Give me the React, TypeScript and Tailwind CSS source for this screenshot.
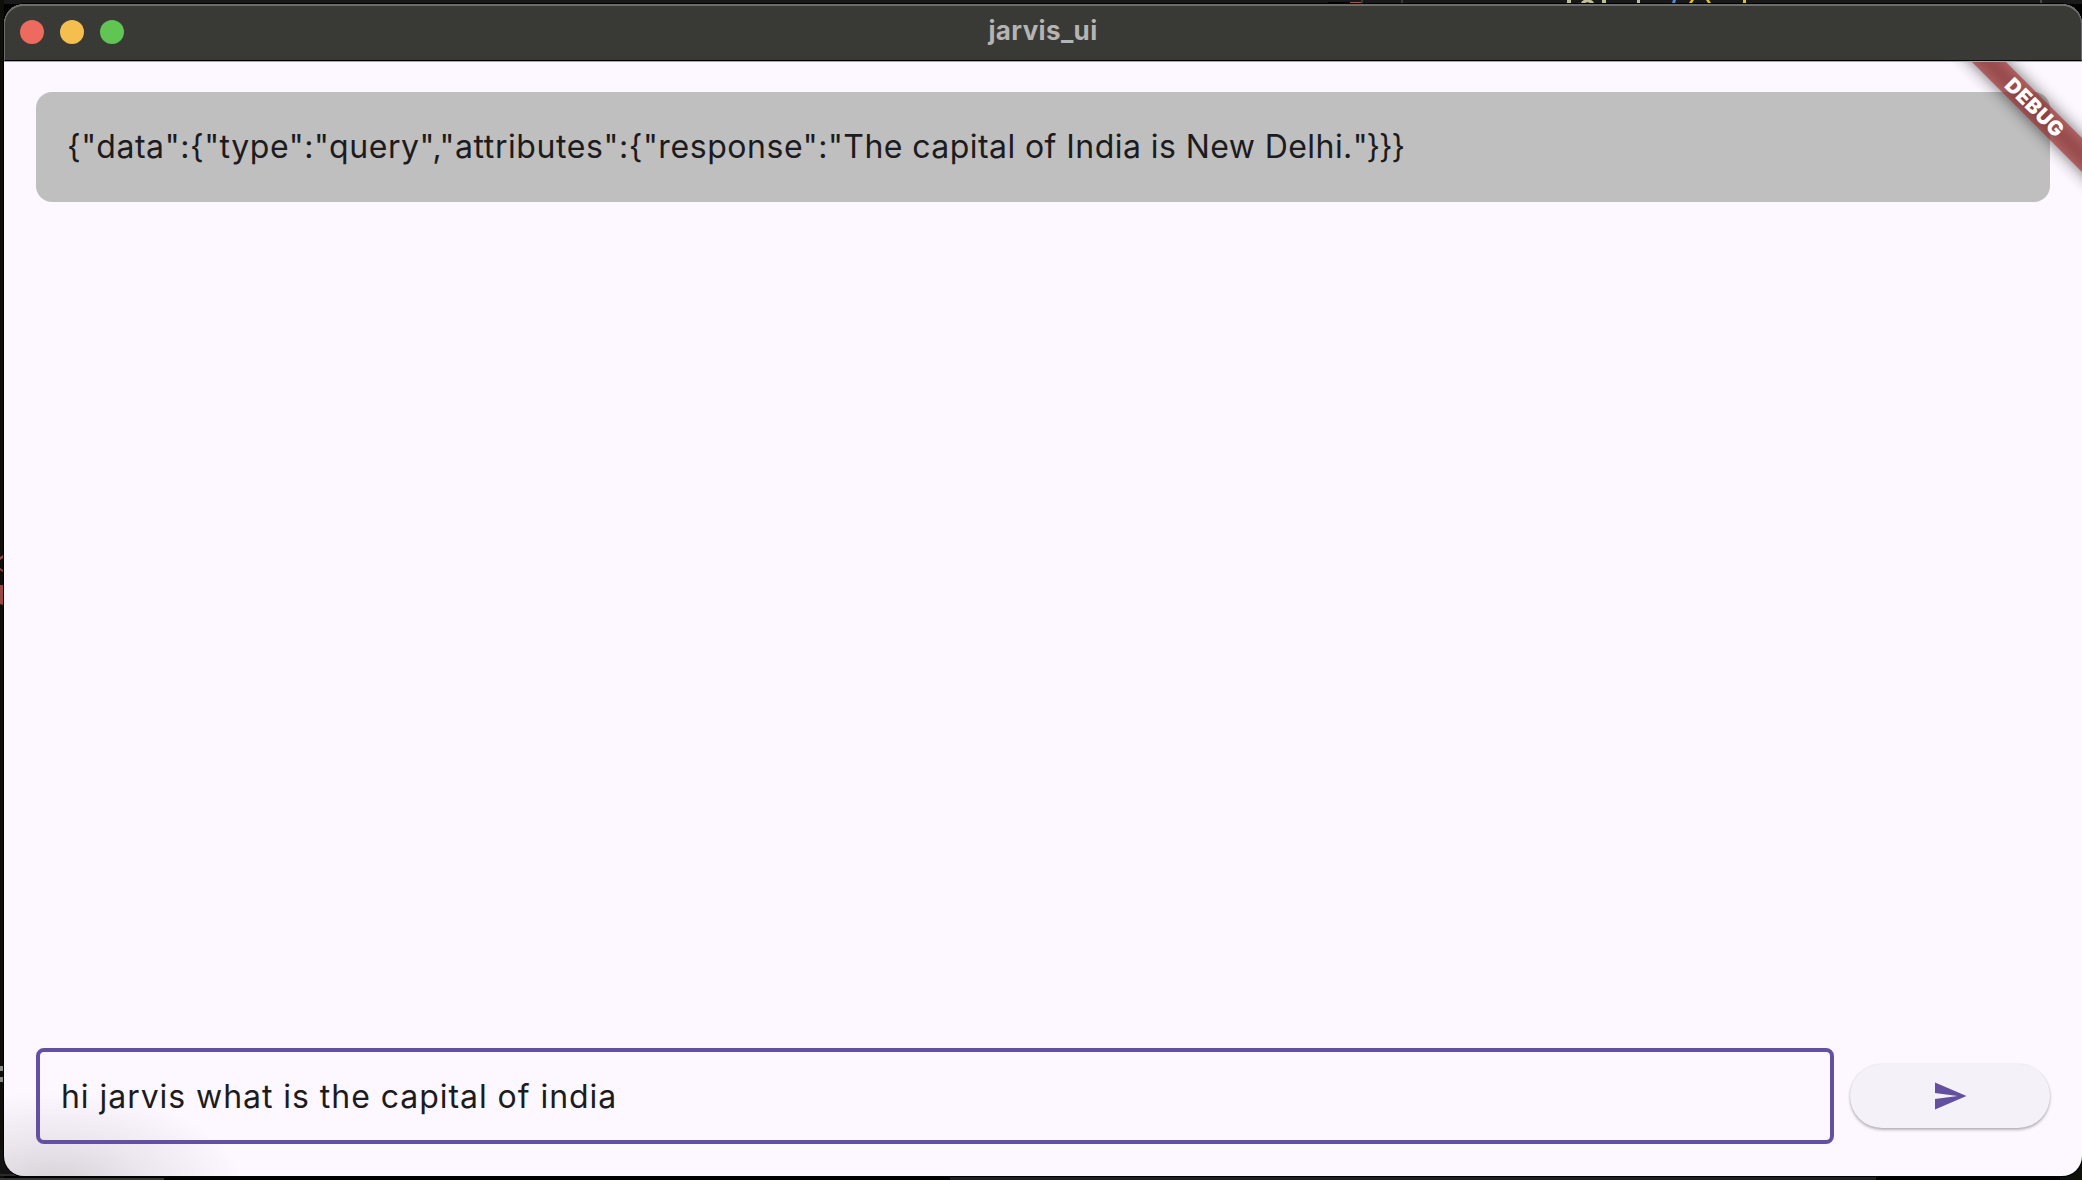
const RESPONSE_HEAD = '{"data":{"type":"query","attributes":{"response":';
const RESPONSE_TEXT = '"The capital of India is New Delhi.';
const RESPONSE_TAIL = '"}}}';

function Desktop() {
  return (
    <svg className="absolute inset-0" width="2082" height="1180" aria-hidden="true">
      <rect width="2082" height="4" fill="#191919" />
      <rect x="0" y="0" width="4" height="1180" fill="#0f0e09" />
      <rect x="1328" y="2" width="22" height="1" fill="#000" />
      <rect x="1350" y="2" width="11" height="1" fill="#d2453e" />
      <rect x="1361" y="0" width="2" height="3" fill="#3a3a3a" />
      <rect x="1401" y="0" width="2" height="3" fill="#3a3a3a" />
      <rect x="1567" y="0" width="4" height="3" fill="#c0c096" />
      <path d="M1581 3 Q1581.500 1 1584 0 H1591 Q1593.500 1 1594 3 H1590 Q1587.500 1.500 1585 3Z" fill="#c0c096" />
      <rect x="1602" y="0" width="4" height="3" fill="#c0c096" />
      <rect x="1637" y="0" width="3" height="3" fill="#c0c096" />
      <path d="M1673 0h3l-1 3h-3z" fill="#4a90e8" />
      <path d="M1691 0h3l-2 3h-3z" fill="#e0c130" />
      <path d="M1706 0h3l2 3h-3z" fill="#e0c130" />
      <rect x="1743" y="0" width="3" height="3" fill="#e0c130" />
      <rect x="2040" y="0" width="2" height="3" fill="#4a4a4a" />
      <path d="M0 557l3-2v3l-3 2z M0 568l3 2v2l-3-2z M0 585h3v20l-3-1z" fill="#9c4545" />
      <rect x="0" y="1066" width="3" height="5" fill="#8a8a85" />
      <rect x="0" y="1077" width="3" height="5" fill="#8a8a85" />
      <rect x="0" y="1150" width="20" height="24" fill="#131313" />
      <rect x="0" y="1174" width="30" height="2" fill="#2c2c2c" />
      <rect x="0" y="1178" width="164" height="2" fill="#343434" />
      <rect x="950" y="1177" width="926" height="3" fill="#1f1e20" />
      <rect x="2060" y="1150" width="22" height="30" fill="#0d120b" />
    </svg>
  );
}

function TitleBar() {
  return (
    <header className="relative flex h-[58px] shrink-0 items-center justify-center rounded-t-[20px] border-b border-b-[#aaa6aa] bg-[#393936]">
      <div className="absolute inset-0 rounded-t-[20px] border-x border-t-2 border-b border-x-[#6a6a68] border-t-[#6d6d6b] border-b-black" />
      <div className="absolute top-4 left-4 flex gap-4">
        <span className="size-6 rounded-full bg-[#ec6a5e]" />
        <span className="size-6 rounded-full bg-[#f4bf4f]" />
        <span className="size-6 rounded-full bg-[#61c554]" />
      </div>
      <h1 className="-mt-1 font-['Inter'] text-[26px] leading-8 font-bold tracking-[0.35px] text-[#b4b4b2]">
        jarvis_ui
      </h1>
    </header>
  );
}

function DebugBanner() {
  return (
    <div className="pointer-events-none absolute top-0 right-0 h-[200px] w-[200px] overflow-hidden">
      <div className="absolute top-[33px] left-[32px] h-6 w-[240px] rotate-45 bg-black/55 blur-[8px]" />
      <div className="absolute top-[33px] left-[32px] flex h-6 w-[240px] rotate-45 items-center justify-center bg-[#a73030]/63 pl-0.5 font-['Inter'] text-[20.4px] leading-6 font-black tracking-[0.6px] text-white">
        DEBUG
      </div>
    </div>
  );
}

export default function App() {
  return (
    <div className="relative h-[1180px] w-[2082px] overflow-hidden bg-black pt-1 pl-1">
      <Desktop />
      <div className="relative flex h-[1172px] flex-col overflow-hidden rounded-[20px] bg-[#fdf8ff] shadow-[0_0_0_1px_black]">
        <TitleBar />
        <main className="relative flex flex-1 flex-col justify-between px-8 pt-[30px] pb-8">
          <div className="pointer-events-none absolute bottom-0 left-0 h-[140px] w-[300px] bg-radial-[ellipse_190px_95px_at_50px_150px] from-black/16 via-black/7 to-transparent" />
          <div className="flex h-[110px] items-center rounded-2xl bg-[#bfbfbf] pr-8 pl-[31px] font-['Inter'] text-[32px] leading-[46px] text-[#1c1b20]">
            <p className="whitespace-nowrap">
              <span className="tracking-[0.57px]">{RESPONSE_HEAD}</span>
              <span className="tracking-[0.43px]">{RESPONSE_TEXT}</span>
              <span className="tracking-[-1.1px]">{RESPONSE_TAIL}</span>
            </p>
          </div>
          <DebugBanner />
          <div className="relative flex items-center gap-4">
            <input
              className="h-24 min-w-0 flex-1 rounded-lg border-4 border-[#6450a0] bg-transparent pr-5 pl-[21px] font-['Inter'] text-[32px] tracking-[0.95px] text-[#1c1b20] outline-none"
              defaultValue="hi jarvis what is the capital of india"
            />
            <button
              className="flex h-16 w-[200px] items-center justify-center rounded-full bg-[#f4f1f9] shadow-[0_2px_3px_rgba(0,0,0,0.28),0_0_2px_rgba(0,0,0,0.1)]"
              aria-label="Send"
            >
              <svg width="36" height="36" viewBox="0 0 24 24" fill="#6450a0">
                <path d="M2.01 21L23 12 2.01 3 2 10l15 2-15 2z" />
              </svg>
            </button>
          </div>
        </main>
      </div>
    </div>
  );
}
